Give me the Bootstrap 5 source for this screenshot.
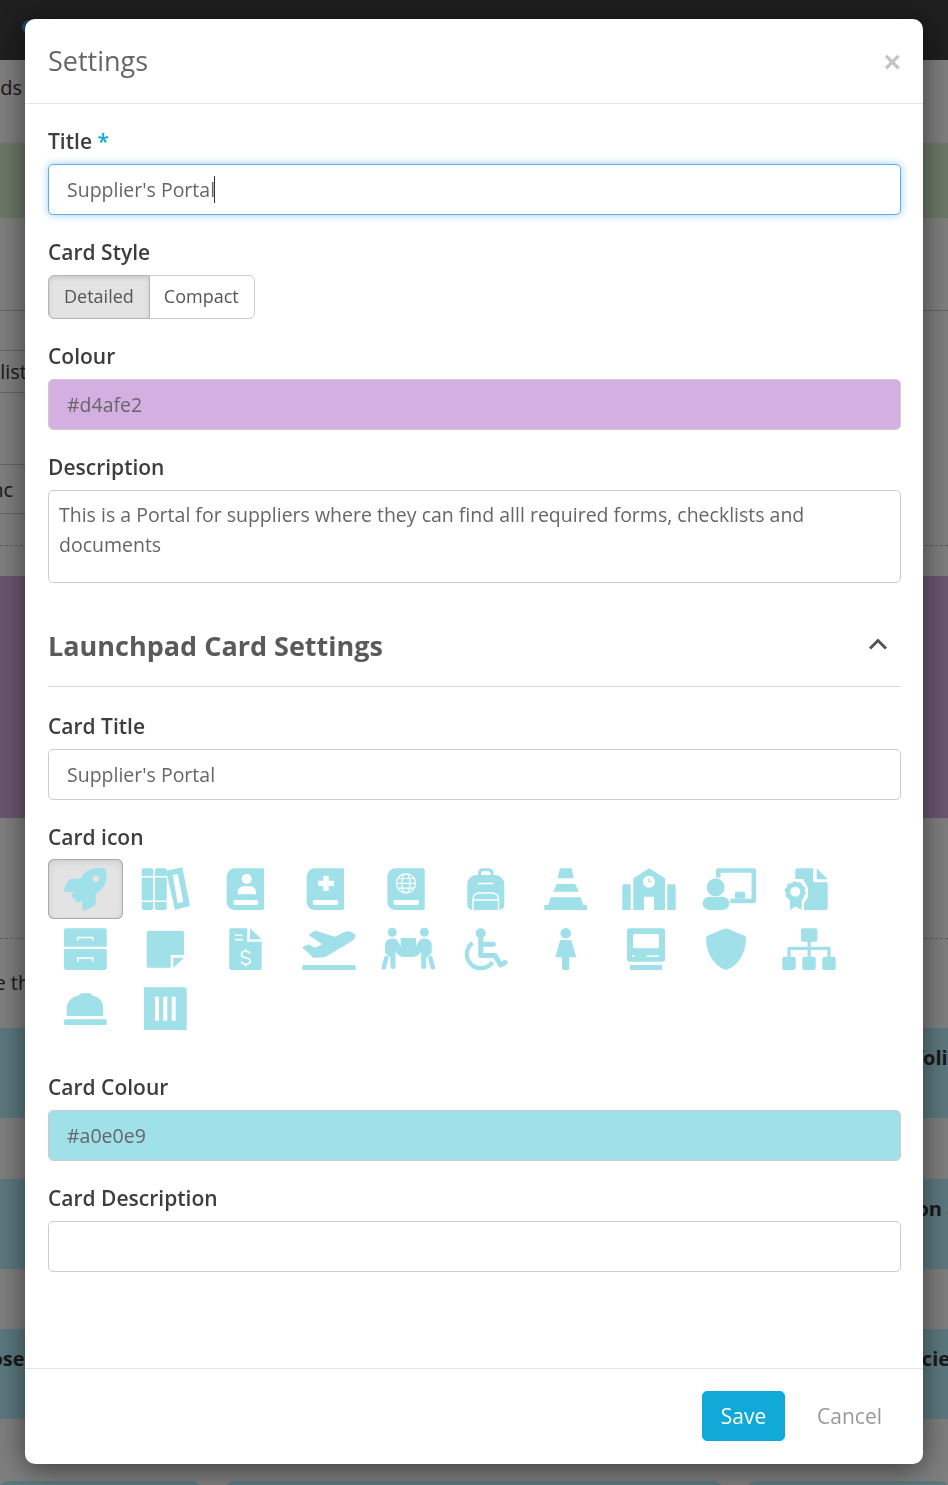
<!DOCTYPE html>
<html lang="en">
<head>
    <meta charset="UTF-8">
    <meta name="viewport" content="width=device-width, initial-scale=1.0">
    <title>Settings</title>
    <link href="https://cdn.jsdelivr.net/npm/bootstrap@5.3.0/dist/css/bootstrap.min.css" rel="stylesheet">
    <style>
        html, body {
            height: 1485px;
            overflow: hidden;
        }
        body {
            font-family: "Open Sans", "Liberation Sans", sans-serif;
            background-color: #fff;
            color: #333;
        }
        /* page behind the dialog */
        .top-strip {
            height: 60px;
            background-color: #3e3e3e;
            padding: 20px 0 0 22px;
        }
        .top-dot {
            width: 14px;
            height: 14px;
            border-radius: 50%;
            background-color: #4a90d9;
        }
        .page-line {
            font-size: 20px;
            white-space: nowrap;
            overflow: hidden;
        }
        .clip-left {
            width: 22px;
            display: flex;
            justify-content: flex-end;
        }
        .band-green { height: 75px; background-color: #d9f2d0; margin-top: 40px; }
        .band-purple { height: 242px; background-color: #d4afe2; margin-top: 30px; }
        .band-blue {
            height: 90px;
            background-color: #b9f3fe;
            display: flex;
            align-items: flex-start;
            justify-content: space-between;
            padding-top: 15px;
            font-size: 20px;
            font-weight: 700;
            line-height: 30px;
            white-space: nowrap;
            overflow: hidden;
        }
        .rule-solid { border-bottom: 1px solid #ccc; }
        .rule-dashed { border-bottom: 1px dashed #bbb; }
        .ghost-box {
            width: 28px;
            border: 1px solid #ccc;
            border-left: 0;
            overflow: hidden;
            display: flex;
            justify-content: flex-end;
            font-size: 20px;
            white-space: nowrap;
        }
        .tile-row { display: flex; gap: 26px; margin-top: 62px; }
        .tile { height: 40px; background-color: #b9f3fe; border-radius: 8px 8px 0 0; }

        /* dialog */
        #settingsModal .modal-dialog {
            max-width: 898px;
            margin: 19px 25px;
        }
        #settingsModal .modal-content {
            border: 0;
            border-radius: 10px;
            box-shadow: 0 5px 30px rgba(0, 0, 0, .55);
            height: 1445px;
        }
        #settingsModal .modal-header {
            height: 85px;
            padding: 0 23px;
            border-bottom: 1px solid #e5e5e5;
        }
        #settingsModal .modal-title {
            font-size: 27px;
            font-weight: 400;
            color: #666;
        }
        .close-x {
            background: none;
            border: 0;
            padding: 2px 0 0 0;
            margin-right: -1px;
            color: #c4c4c4;
            font-size: 30px;
            font-weight: 700;
            line-height: 1;
            font-family: "Liberation Sans", sans-serif;
        }
        #settingsModal .modal-body {
            padding: 25px 22px 0 23px;
        }
        #settingsModal .modal-footer {
            padding: 22px 41px 23px 0;
            border-top: 1px solid #e5e5e5;
            gap: 32px;
        }
        #settingsModal .modal-footer > * { margin: 0; }
        .field-group { margin-bottom: 25px; }
        .field-label {
            display: block;
            font-size: 21px;
            font-weight: 600;
            line-height: 24px;
            color: #3d3d3d;
            margin-bottom: 11px;
        }
        .req-mark { color: #11aad8; }
        .field-input.form-control {
            height: 51px;
            font-size: 19.5px;
            color: #666;
            padding: 0 18px;
            border-color: #ccc;
            border-radius: 5px;
        }
        .field-input.is-focused {
            border-color: #5cb0ee;
            box-shadow: 0 0 8px rgba(92, 176, 238, .6);
        }
        .field-area.form-control {
            height: 93px;
            font-size: 19.5px;
            line-height: 30px;
            color: #666;
            padding: 8.5px 10px;
            border-color: #ccc;
            border-radius: 5px;
            resize: none;
        }
        .caret-wrap { position: relative; }
        .text-caret {
            position: absolute;
            left: 166px;
            top: 12px;
            width: 1px;
            height: 27px;
            background-color: #333;
        }
        .swatch-purple.form-control { background-color: #d4afe2; }
        .swatch-blue.form-control { background-color: #a0e0e9; }
        .style-btn.btn {
            height: 44px;
            font-size: 18px;
            color: #555;
            background-color: #fff;
            border: 1px solid #ccc;
            padding: 0 15px 2px 15px;
        }
        .style-btn.btn + .style-btn.btn { padding-left: 14px; }
        .style-btn.btn.active {
            background-color: #e3e3e3;
            color: #555;
            border-color: #b5b5b5;
            box-shadow: inset 0 2px 4px rgba(0, 0, 0, .12);
        }
        .section-head {
            margin-top: 40px;
            height: 64px;
            padding-bottom: 16px;
            margin-bottom: 27px;
            border-bottom: 1px solid #ddd;
        }
        .section-head h2 {
            font-size: 27px;
            font-weight: 700;
            color: #5a5a5a;
            margin: 0;
        }
        .collapse-arrow { margin-right: 13px; margin-top: -6px; }
        .icon-grid {
            display: flex;
            flex-wrap: wrap;
            column-gap: 5px;
            margin-bottom: 36px;
        }
        .icon-cell {
            width: 75px;
            height: 60px;
            padding: 0;
            border: 0;
            background: none;
            border-radius: 6px;
        }
        .icon-cell svg { display: block; }
        .icon-cell.is-picked {
            background-color: #e3e3e3;
            box-shadow: inset 0 0 0 1px #aaa, inset 0 2px 7px rgba(0, 0, 0, .12);
        }
        .ic { fill: #a0e0e9; }
        .ic-s { fill: none; stroke: #a0e0e9; }
        .cut { fill: #fff; }
        .cut-s { fill: none; stroke: #fff; }
        .save-btn.btn {
            width: 83px;
            height: 50px;
            background-color: #11aad8;
            border-color: #11aad8;
            color: #fff;
            font-size: 21px;
            border-radius: 5px;
            padding: 1px 0 0;
        }
        .cancel-btn.btn {
            padding: 1px 0 0;
            border: 0;
            color: #999;
            font-size: 21px;
            text-decoration: none;
        }
    </style>
</head>
<body>
    <!-- Page behind the dialog -->
    <div class="top-strip"><div class="top-dot"></div></div>
    <div class="page-line clip-left" style="margin-top: 13px"><span>Standards</span></div>
    <div class="band-green"></div>
    <div class="rule-solid" style="height: 93px"></div>
    <div class="ghost-box" style="margin-top: 39px; height: 43px; padding-top: 6px"><span>Checklist</span></div>
    <div class="ghost-box" style="margin-top: 71px; height: 50px; padding: 10px 14px 0 0"><span>Sync</span></div>
    <div class="rule-dashed" style="height: 32px"></div>
    <div class="band-purple"></div>
    <div class="rule-dashed" style="height: 121px"></div>
    <div class="page-line" style="margin-top: 29px; margin-left: -25px">the th</div>
    <div class="band-blue" style="margin-top: 30px"><span></span><span style="margin-right: -12px">Portfolio</span></div>
    <div class="band-blue" style="margin-top: 61px"><span></span><span style="margin-right: -37px">Position and</span></div>
    <div class="band-blue" style="margin-top: 60px"><span style="margin-left: -57px">Purpose</span><span style="margin-right: -12px">Policies</span></div>
    <div class="tile-row">
        <div class="tile" style="width: 200px"></div>
        <div class="tile" style="width: 496px"></div>
        <div class="tile" style="width: 200px"></div>
    </div>

    <div class="modal-backdrop show"></div>

    <!-- Settings dialog -->
    <div class="modal d-block" id="settingsModal" tabindex="-1">
        <div class="modal-dialog">
            <div class="modal-content">
                <div class="modal-header justify-content-between">
                    <h1 class="modal-title">Settings</h1>
                    <button type="button" class="close-x" aria-label="Close">&times;</button>
                </div>
                <div class="modal-body">
                    <div class="field-group">
                        <label class="field-label" for="fieldTitle">Title <span class="req-mark">*</span></label>
                        <div class="caret-wrap">
                            <input type="text" class="form-control field-input is-focused" id="fieldTitle" value="Supplier's Portal">
                            <span class="text-caret"></span>
                        </div>
                    </div>
                    <div class="field-group">
                        <span class="field-label">Card Style</span>
                        <div class="btn-group" role="group">
                            <button type="button" class="btn style-btn active">Detailed</button>
                            <button type="button" class="btn style-btn">Compact</button>
                        </div>
                    </div>
                    <div class="field-group">
                        <label class="field-label" for="fieldColour">Colour</label>
                        <input type="text" class="form-control field-input swatch-purple" id="fieldColour" value="#d4afe2">
                    </div>
                    <div class="field-group mb-0">
                        <label class="field-label" for="fieldDesc">Description</label>
                        <textarea class="form-control field-area" id="fieldDesc">This is a Portal for suppliers where they can find alll required forms, checklists and documents</textarea>
                    </div>

                    <div class="section-head d-flex justify-content-between align-items-center">
                        <h2>Launchpad Card Settings</h2>
                        <svg class="collapse-arrow" width="20" height="14" viewBox="0 0 20 14"><path d="M2 11.5 10 3.5l8 8" fill="none" stroke="#555" stroke-width="3"/></svg>
                    </div>

                    <div class="field-group">
                        <label class="field-label" for="fieldCardTitle">Card Title</label>
                        <input type="text" class="form-control field-input" id="fieldCardTitle" value="Supplier's Portal">
                    </div>
                    <span class="field-label" style="margin-bottom: 10px">Card icon</span>
                    <div class="icon-grid">
                        <!-- rocket -->
                        <button type="button" class="icon-cell is-picked"><svg width="75" height="60" viewBox="48 859 75 60"><g transform="translate(63.7 868) scale(.0833)"><path class="ic" fill-rule="evenodd" d="M505.12 19.09c-1.19-5.53-6.66-11-12.21-12.19C460.72 0 435.51 0 410.41 0 307.18 0 245.27 55.2 199.05 128H94.84c-16.35.02-35.56 11.88-42.89 26.48L2.52 253.3A28.4 28.4 0 0 0 0 264a24 24 0 0 0 24 24h103.81l-22.47 22.47c-11.37 11.36-13 32.26 0 45.25l50.9 50.9c11.16 11.19 32.16 13.16 45.28 0l22.47-22.47V488a24 24 0 0 0 24 24 28.56 28.56 0 0 0 10.71-2.52l98.73-49.39c14.63-7.3 26.51-26.5 26.51-42.86V312.8c72.6-46.31 128.03-108.41 128.03-211.1C512.08 76.5 512.08 51.3 505.12 19.09ZM384.04 168a40 40 0 1 1 40.01-40 40 40 0 0 1-40.01 40Z"/></g></svg></button>
                        <!-- books -->
                        <button type="button" class="icon-cell"><svg width="75" height="60" viewBox="128 859 75 60">
                            <path class="ic" d="M143.7 868.3h7.6a2 2 0 0 1 2 2v5.7h-11.6v-5.7a2 2 0 0 1 2-2zM141.7 877.5h11.6v23h-11.6zM141.7 902h11.6v6a2 2 0 0 1-2 2h-7.6a2 2 0 0 1-2-2zM157 868.3h7.7a2 2 0 0 1 2 2v5.7H155v-5.7a2 2 0 0 1 2-2zM155 877.5h11.7v23H155zM155 902h11.7v6a2 2 0 0 1-2 2H157a2 2 0 0 1-2-2z"/>
                            <path class="ic" fill-rule="evenodd" d="M166 870.7l16.3-3.4 7.7 38.7-15 4zM172.7 875l5-1 5.6 27.7-5.6 1.6z"/>
                        </svg></button>
                        <!-- book with person -->
                        <button type="button" class="icon-cell"><svg width="75" height="60" viewBox="208 859 75 60">
                            <path class="ic" d="M234.7 868.3H262.5q1.5 0 1.5 1.5v38.7q0 1.5-1.5 1.5H234.7a8 8 0 0 1-8-8V876.3a8 8 0 0 1 8-8z"/>
                            <rect class="cut" x="233.3" y="900" width="25" height="5" rx="2"/>
                            <circle class="cut" cx="246.7" cy="879" r="5"/>
                            <path class="cut" d="M237.7 894.3v-2.5a5.5 5.5 0 0 1 5.5-5.5h7.3a5.5 5.5 0 0 1 5.5 5.5v2.5z"/>
                        </svg></button>
                        <!-- book with cross -->
                        <button type="button" class="icon-cell"><svg width="75" height="60" viewBox="288 859 75 60">
                            <path class="ic" d="M314.7 868.3H342.5q1.5 0 1.5 1.5v38.7q0 1.5-1.5 1.5H314.7a8 8 0 0 1-8-8V876.3a8 8 0 0 1 8-8z"/>
                            <rect class="cut" x="312.7" y="900" width="25.6" height="5" rx="2"/>
                            <path class="cut" d="M323.3 875.7h5.4v5h5.3v5.3h-5.3v5h-5.4v-5H318v-5.3h5.3z"/>
                        </svg></button>
                        <!-- atlas -->
                        <button type="button" class="icon-cell"><svg width="75" height="60" viewBox="368 859 75 60">
                            <path class="ic" d="M395.4 868.3H423.2q1.5 0 1.5 1.5v38.7q0 1.5-1.5 1.5H395.4a8 8 0 0 1-8-8V876.3a8 8 0 0 1 8-8z"/>
                            <rect class="cut" x="393.4" y="900" width="25.6" height="5" rx="2"/>
                            <g class="cut-s" stroke-width="1.2">
                                <circle cx="406" cy="883.3" r="9.6"/>
                                <ellipse cx="406" cy="883.3" rx="4.2" ry="9.6"/>
                                <path d="M396.4 883.3h19.2M397.8 878.5h16.4M397.8 888.1h16.4"/>
                            </g>
                        </svg></button>
                        <!-- backpack -->
                        <button type="button" class="icon-cell"><svg width="75" height="60" viewBox="448 859 75 60">
                            <path class="ic" d="M467.3 884a9 9 0 0 1 9-9h19a9 9 0 0 1 9 9v21a5 5 0 0 1-5 5h-27a5 5 0 0 1-5-5z"/>
                            <rect class="ic-s" x="479.5" y="869.8" width="12.5" height="7" rx="3" stroke-width="3"/>
                            <rect class="cut" x="477.7" y="882.7" width="15.6" height="1.6"/>
                            <path class="cut-s" stroke-width="1.5" d="M473 910v-11a6 6 0 0 1 6-6h13.5a6 6 0 0 1 6 6v11M473 900h25.5"/>
                        </svg></button>
                        <!-- traffic cone -->
                        <button type="button" class="icon-cell"><svg width="75" height="60" viewBox="528 859 75 60">
                            <path class="ic" d="M560 868.3h11.7l2 10h-16zM556.7 884H575l4 7.7h-25.7zM550.7 897.3h30l2.6 7.7h3.7v5h-42.7v-5h4z"/>
                        </svg></button>
                        <!-- school -->
                        <button type="button" class="icon-cell"><svg width="75" height="60" viewBox="608 859 75 60">
                            <path class="ic" d="M649.3 868.3 665 878.3V910H654v-13.3h-10V910h-10.7V878.3zM622.3 886.3a2 2 0 0 1 2-2h6.4V910h-8.4zM667.3 884.3h6.4a2 2 0 0 1 2 2V910h-8.4z"/>
                            <circle class="cut" cx="649" cy="881.7" r="6"/>
                            <path class="ic-s" stroke-width="1.1" d="M649 878v3.7h3"/>
                        </svg></button>
                        <!-- teacher at board -->
                        <button type="button" class="icon-cell"><svg width="75" height="60" viewBox="688 859 75 60">
                            <path class="ic-s" stroke-width="4.5" stroke-linejoin="round" d="M718.3 877.5v-7h35.5v30.5h-23.5"/>
                            <rect class="ic" x="735" y="891.7" width="10" height="7"/>
                            <circle class="ic" cx="715.7" cy="887.3" r="9"/>
                            <rect class="ic" x="702.7" y="896.7" width="26.7" height="13.3" rx="6.6"/>
                        </svg></button>
                        <!-- certificate file -->
                        <button type="button" class="icon-cell"><svg width="75" height="60" viewBox="768 859 75 60">
                            <path class="ic" d="M797 868.3H813.3V882.3H827.7V908a2 2 0 0 1-2 2H804V903L808 897V888L803 879H795.3V870a2 2 0 0 1 1.7-1.7zM816.7 868.3l11 11h-11z"/>
                            <path class="ic" d="M790 900h12l-.5 10-6-3.5-5.5 3.5z"/>
                            <circle class="ic" cx="795.3" cy="891.7" r="9.800"/>
                            <circle class="ic-s" cx="795.3" cy="891.7" r="10" stroke-width="1.400" stroke-dasharray="3 3.300"/>
                            <circle class="cut" cx="795.3" cy="891.7" r="5"/>
                        </svg></button>
                        <!-- filing drawers -->
                        <button type="button" class="icon-cell"><svg width="75" height="60" viewBox="48 919 75 60">
                            <path class="ic" d="M66 928.3h38.7a2 2 0 0 1 2 2v16.4H64v-16.4a2 2 0 0 1 2-2zM64 949h42.7v19a2 2 0 0 1-2 2H66a2 2 0 0 1-2-2z"/>
                            <path class="cut-s" stroke-width="1.5" d="M77.7 940.7v-3.3h15v3.3M77.7 961.7v-3.6h15v3.6"/>
                        </svg></button>
                        <!-- sticky note -->
                        <button type="button" class="icon-cell"><svg width="75" height="60" viewBox="128 919 75 60">
                            <path class="ic" d="M148.7 930.7H182a2 2 0 0 1 2 2V955H170.7v12.7H148.7a2 2 0 0 1-2-2V932.7a2 2 0 0 1 2-2zM173.3 957.7H184l-10.7 10z"/>
                        </svg></button>
                        <!-- invoice -->
                        <button type="button" class="icon-cell"><svg width="75" height="60" viewBox="208 919 75 60">
                            <path class="ic" d="M231 928.3h16.3v13.4h14.4v26.6a1.7 1.7 0 0 1-1.7 1.7h-29a1.7 1.7 0 0 1-1.7-1.7V930a1.7 1.7 0 0 1 1.7-1.7zM250 928.3l11.7 11H250z"/>
                            <path class="cut" d="M235 934.5h7.5v1.6H235zM235 938.8h7.5v1.6H235z"/>
                            <path class="cut-s" stroke-width="1.6" d="M250 953.7c-.6-1.6-2.1-2.4-4.3-2.4s-4.3 1.1-4.3 3.1 1.8 2.8 4.3 3.3 4.5 1.3 4.5 3.4-2 3.1-4.5 3.1-4-1-4.6-2.6M245.7 949v2.3M245.7 964v2.6"/>
                        </svg></button>
                        <!-- plane departing -->
                        <button type="button" class="icon-cell"><svg width="75" height="60" viewBox="288 919 75 60">
                            <path class="ic" stroke="#a0e0e9" stroke-width="1" stroke-linejoin="round" d="M302.8 947.3l5.5-2.3 6.7 3.3 8.3-4-14-9.3 5.7-4 20 6.3 10-5q5-2 10 2.7 1 3-3.3 5.7l-26.7 16-11.7.6z"/>
                            <rect class="ic" x="302.3" y="965" width="53.4" height="5" rx="1"/>
                        </svg></button>
                        <!-- people carrying -->
                        <button type="button" class="icon-cell"><svg width="75" height="60" viewBox="368 919 75 60">
                            <path class="ic" d="M400.7 938H416V955H400.700z"/>
                            <g id="carryLeft">
                                <circle class="ic" cx="392.3" cy="932.300" r="4.500"/>
                                <path class="ic" d="M385 945a6.500 6.500 0 0 1 6.500-6.500h2q3 0 4.500 3l4.500 8q2 3 6 4.500v3h-4q-5 0-8-4l-1-1V966.500a2.500 2.500 0 0 1-5 0V958l-5.500-5z"/>
                                <path class="ic-s" stroke-width="4.500" stroke-linecap="round" d="M386.300 958l-2.500 9.500"/>
                            </g>
                            <use href="#carryLeft" transform="translate(816.700 0) scale(-1 1)"/>
                        </svg></button>
                        <!-- wheelchair -->
                        <button type="button" class="icon-cell"><svg width="75" height="60" viewBox="448 919 75 60">
                            <circle class="ic" cx="480.7" cy="933.3" r="5"/>
                            <path class="ic-s" stroke-width="5" stroke-linejoin="round" stroke-linecap="round" d="M480.7 938v17.5H495l5.5 9.5 4.5-2.5M480.7 944.3h12.6"/>
                            <path class="ic-s" stroke-width="4.2" d="M472.500 943A14 14 0 1 0 492.500 962"/>
                        </svg></button>
                        <!-- female figure -->
                        <button type="button" class="icon-cell"><svg width="75" height="60" viewBox="528 919 75 60">
                            <circle class="ic" cx="565.7" cy="933.3" r="5.3"/>
                            <path class="ic" stroke="#a0e0e9" stroke-width="2" stroke-linejoin="round" d="M561 941h9.5l4.5 15.3h-18.500z"/>
                            <rect class="ic" x="562" y="956" width="7.3" height="14" rx="1.5"/>
                        </svg></button>
                        <!-- desktop computer -->
                        <button type="button" class="icon-cell"><svg width="75" height="60" viewBox="608 919 75 60">
                            <rect class="ic" x="627" y="928.3" width="38" height="33.4" rx="2.5"/>
                            <rect class="cut" x="633" y="934" width="26" height="14.300" rx="1.500"/>
                            <path class="cut" d="M632.500 955h2v2h-2zM646.700 955.500H659v1.500h-12.300z"/>
                            <rect class="ic" x="630" y="965" width="32" height="5"/>
                        </svg></button>
                        <!-- shield -->
                        <button type="button" class="icon-cell"><svg width="75" height="60" viewBox="688 919 75 60">
                            <path class="ic" d="M724.500 928.800q1.500-.6 3 0l16.500 6.700q2 .9 2 3c0 12-6 26-18.500 31q-1.500.6-3 0C712 964.500 706 950.500 706 938.500q0-2.100 2-3z"/>
                        </svg></button>
                        <!-- sitemap -->
                        <button type="button" class="icon-cell"><svg width="75" height="60" viewBox="768 919 75 60">
                            <rect class="ic" x="801" y="928.300" width="16.300" height="13.400" rx="2"/>
                            <path class="ic" d="M807.500 941h3.300v5.700h17.900a2 2 0 0 1 2 2v8h-3.300v-6.700h-16.600v6.700h-3.300v-6.700H790.600v6.700h-3.300v-8a2 2 0 0 1 2-2h18.200z"/>
                            <rect class="ic" x="782.300" y="956.700" width="13.400" height="13.300" rx="2"/>
                            <rect class="ic" x="802.300" y="956.700" width="13.400" height="13.300" rx="2"/>
                            <rect class="ic" x="822.300" y="956.700" width="13.400" height="13.300" rx="2"/>
                        </svg></button>
                        <!-- hard hat -->
                        <button type="button" class="icon-cell"><svg width="75" height="60" viewBox="48 979 75 60">
                            <path class="ic" d="M66.700 1016V1009C66.700 1002 71 997 79 995.500a2.500 2.500 0 0 1 2.500-2.300h8a2.500 2.500 0 0 1 2.500 2.300C100 997 103.300 1002 103.300 1009V1016z"/>
                            <rect class="ic" x="64" y="1019.300" width="42.700" height="5.700" rx="1.500"/>
                        </svg></button>
                        <!-- barcode -->
                        <button type="button" class="icon-cell"><svg width="75" height="60" viewBox="128 979 75 60">
                            <path class="ic" d="M144 987.300h40a2.700 2.700 0 0 1 2.700 2.700v40H144z"/>
                            <path class="cut" d="M155 996.700h4v24h-4zM163.300 996.700h4v24h-4zM171.700 996.700h4v24h-4z"/>
                        </svg></button>
                    </div>
                    <div class="field-group">
                        <label class="field-label" for="fieldCardColour">Card Colour</label>
                        <input type="text" class="form-control field-input swatch-blue" id="fieldCardColour" value="#a0e0e9">
                    </div>
                    <div class="field-group mb-0">
                        <label class="field-label" for="fieldCardDesc">Card Description</label>
                        <input type="text" class="form-control field-input" id="fieldCardDesc">
                    </div>
                </div>
                <div class="modal-footer">
                    <button type="button" class="btn save-btn">Save</button>
                    <button type="button" class="btn btn-link cancel-btn">Cancel</button>
                </div>
            </div>
        </div>
    </div>

    <script src="https://cdn.jsdelivr.net/npm/bootstrap@5.3.0/dist/js/bootstrap.bundle.min.js"></script>
</body>
</html>
